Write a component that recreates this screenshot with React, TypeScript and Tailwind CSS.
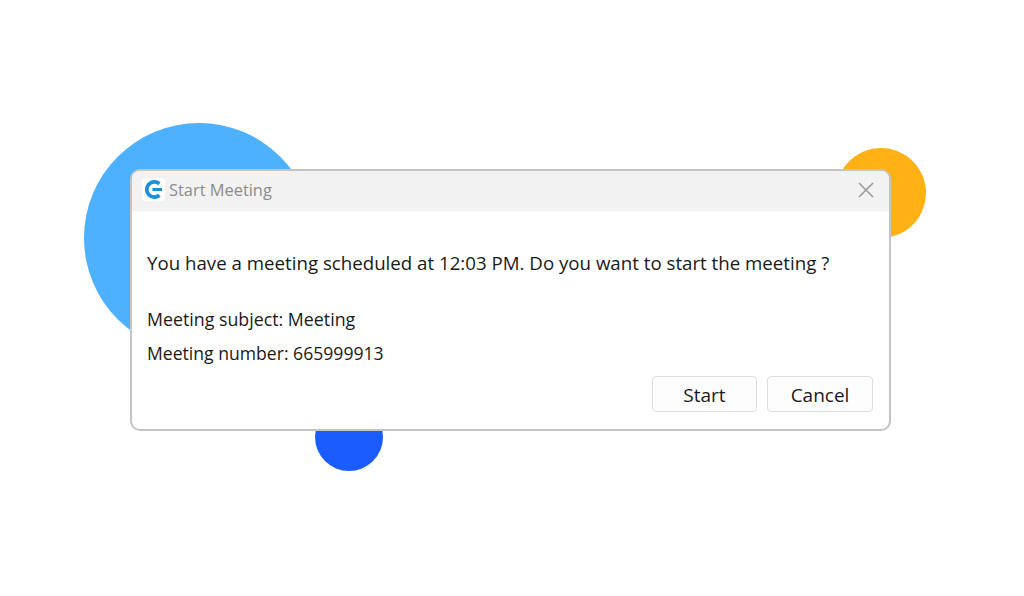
const fontStack = { fontFamily: '"Open Sans", "Noto Sans", sans-serif' };

function Logo() {
  return (
    <div className="flex h-[23px] w-[23px] items-center justify-center rounded-[4px] bg-white">
      <svg width="19" height="19" viewBox="0 0 19 19" fill="none">
        <path d="M15.4 3.8A7.6 7.6 0 1 0 15.4 15.2" stroke="#1a8fdc" strokeWidth="3.8" />
        <path d="M8.4 9.5H18" stroke="#1a8fdc" strokeWidth="3.2" />
      </svg>
    </div>
  );
}

function Button({ label, width }: { label: string; width: string }) {
  return (
    <button className={`flex h-[36px] items-center justify-center rounded-[4px] border border-[#dedede] bg-[#fdfdfd] pt-[2px] text-[19px] text-[#1a1a1a] ${width}`}>
      {label}
    </button>
  );
}

export default function App() {
  return (
    <div className="h-[596px] w-full overflow-hidden bg-white pl-[130px] pt-[169px]" style={fontStack}>
      <div className="relative w-[761px]">
        {/* Decorative circles behind the dialog */}
        <div className="absolute left-[-46px] top-[-46px] h-[230px] w-[230px] rounded-full bg-[#4eb1ff]" />
        <div className="absolute left-[706px] top-[-21px] h-[90px] w-[90px] rounded-full bg-[#ffb116]" />
        <div className="absolute left-[185px] top-[234px] h-[68px] w-[68px] rounded-full bg-[#1a5cff]" />

        <div className="relative h-[262px] overflow-hidden rounded-[10px] border-2 border-[#c4c4c4] bg-white">
          <div className="flex h-[40px] items-center justify-between bg-[#f2f2f2] pb-[2px] pl-[10px] pr-[14px]">
            <div className="flex items-center gap-[4px]">
              <Logo />
              <span className="text-[16.4px] text-[#8c8c8c]">Start Meeting</span>
            </div>
            <svg width="18" height="18" viewBox="0 0 18 18" fill="none" stroke="#9a9a9a" strokeWidth="1.6">
              <path d="M2 2L16 16M16 2L2 16" />
            </svg>
          </div>

          <div className="px-[15px] text-[#1a1a1a]">
            <p className="mt-[39px] text-[18.7px] leading-[26px]">
              You have a meeting scheduled at 12:03 PM. Do you want to start the meeting ?
            </p>
            <p className="mt-[30px] text-[17.8px] leading-[26px]">Meeting subject: Meeting</p>
            <p className="mt-[8px] text-[17.6px] leading-[26px]">Meeting number: 665999913</p>
          </div>

          <div className="mt-[10px] flex justify-end gap-[10px] pr-[16px]">
            <Button label="Start" width="w-[105px]" />
            <Button label="Cancel" width="w-[106px]" />
          </div>
        </div>
      </div>
    </div>
  );
}
